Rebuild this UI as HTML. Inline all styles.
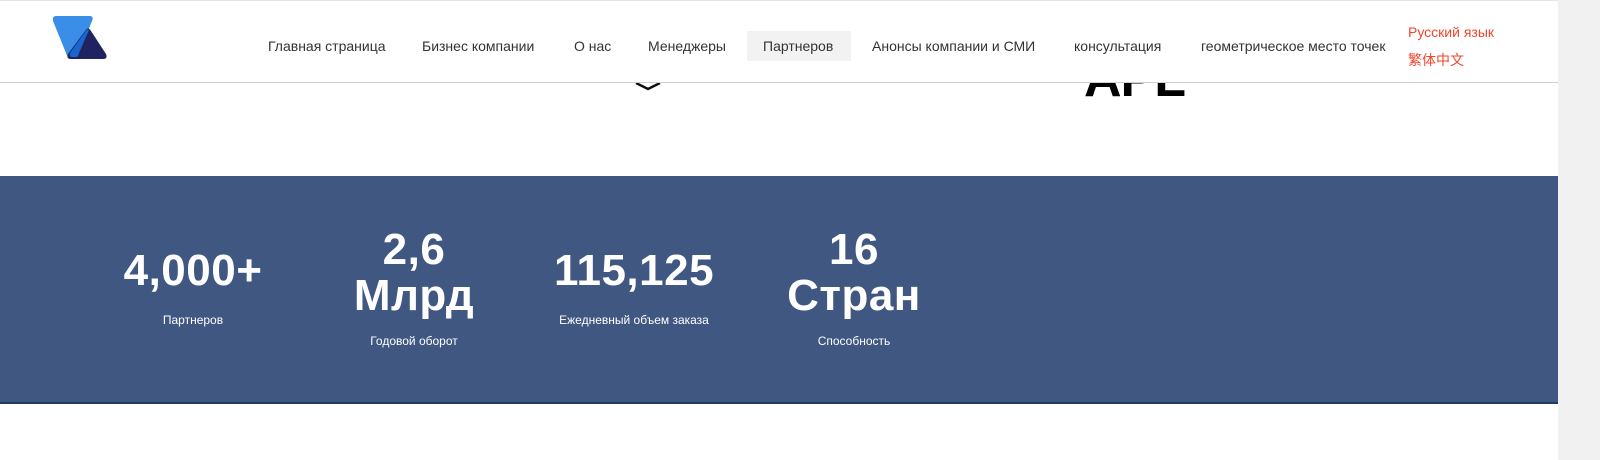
<!DOCTYPE html>
<html><head><meta charset="utf-8"><style>
body{margin:0;width:1600px;height:460px;position:relative;overflow:hidden;background:#fff;font-family:"Liberation Sans","Noto Sans CJK SC",sans-serif}
.hdr{position:absolute;left:0;top:0;width:1558px;height:81px;border-top:1px solid #e3e6e3;border-bottom:1px solid #cfcfcf;background:#fff;z-index:2}
.nav{position:absolute;top:31px;font-size:14px;color:#333;height:29px;line-height:29px}
.nav span{position:absolute;white-space:nowrap}
.sb{position:absolute;right:0;top:0;width:42px;height:460px;background:#f1f1f1}
.band{position:absolute;left:0;top:176px;width:1558px;height:226px;background:#3f5781;border-bottom:2px solid #1f3a66}
.n{position:absolute;color:#fff;font-weight:bold;font-size:44px;text-align:center;width:240px;line-height:46px;letter-spacing:0.5px}
.l{position:absolute;color:#fff;font-size:12px;text-align:center;width:240px}
</style></head><body>
<div class="hdr">
<svg style="position:absolute;left:50px;top:12px" width="62" height="50" viewBox="50 12 62 50">
<path d="M56 15 L90 15 Q94 15 92 20 L79 52 Q77 56 73 56 L70 56 Q67 56 66 52 L53 20 Q52 15 56 15Z" fill="#3b8ee8"/>
<path d="M85 30 Q88 25 91 30 L106 53 Q108 58 103 58 L71 58 Q66 58 68 53Z" fill="#1f2461"/>
<path d="M87 28 L70 52 Q69 56 72 56 L76 56 Q78 56 79 52 L89 29 Z" fill="#1767cc"/>
</svg>
<div style="position:absolute;left:747px;top:30px;width:104px;height:30px;background:#f2f2f2"></div>
<div class="nav"><span style="left:268px">Главная страница</span><span style="left:422px">Бизнес компании</span><span style="left:574px">О нас</span><span style="left:648px">Менеджеры</span><span style="left:763px">Партнеров</span><span style="left:872px">Анонсы компании и СМИ</span><span style="left:1074px">консультация</span><span style="left:1201px">геометрическое место точек</span></div>
<div style="position:absolute;left:1408px;top:23px;font-size:14px;color:#f2452c">Русский язык</div>
<div style="position:absolute;left:1408px;top:49px;font-size:14px;color:#f2452c">繁体中文</div>
</div>
<div style="position:absolute;left:1084px;top:53px;font-size:52px;font-weight:bold;color:#000;line-height:52px;letter-spacing:-1px">APL</div>
<svg style="position:absolute;left:634px;top:82px" width="30" height="10"><path d="M2 1 L14 7 L26 1" stroke="#111" stroke-width="2.5" fill="none"/></svg>
<div class="sb"></div>
<div class="band">
<div class="n" style="left:73px;top:72px">4,000+</div>
<div class="l" style="left:73px;top:137px">Партнеров</div>
<div class="n" style="left:294px;top:51px">2,6<br>Млрд</div>
<div class="l" style="left:294px;top:158px">Годовой оборот</div>
<div class="n" style="left:514px;top:72px">115,125</div>
<div class="l" style="left:514px;top:137px">Ежедневный объем заказа</div>
<div class="n" style="left:734px;top:51px">16<br>Стран</div>
<div class="l" style="left:734px;top:158px">Способность</div>
</div>
</body></html>
